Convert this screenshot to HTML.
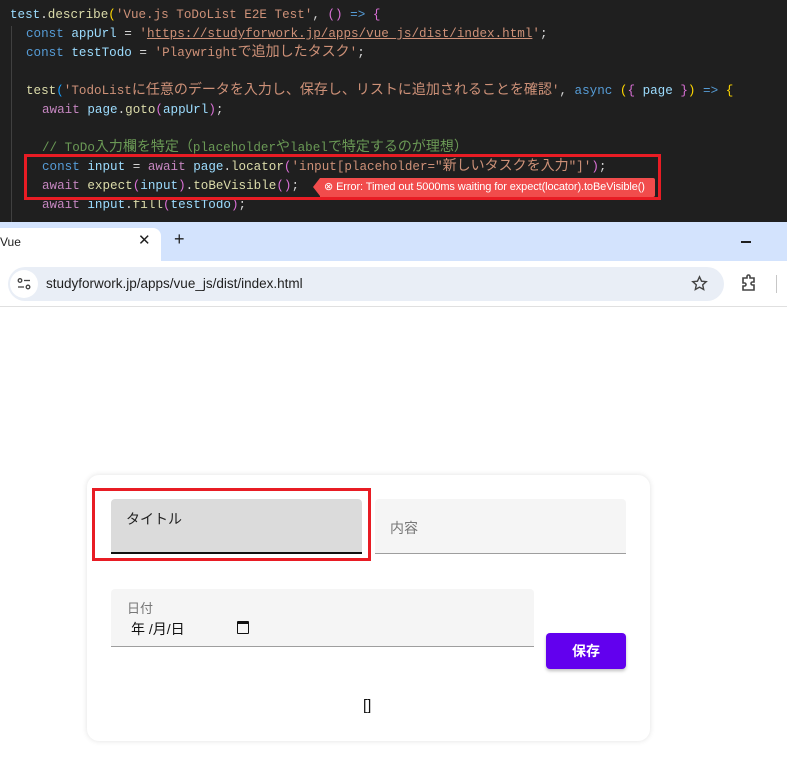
<!DOCTYPE html>
<html><head><meta charset="utf-8"><style>
*{margin:0;padding:0;box-sizing:border-box}
body{width:787px;height:765px;overflow:hidden;background:#fff;font-family:"Liberation Sans","Noto Sans CJK JP",sans-serif;position:relative}
.code{position:absolute;left:0;top:0;width:787px;height:222px;background:#1f1f1f;font-family:"Liberation Mono","Noto Sans CJK JP",monospace;font-size:12.6px;color:#d4d4d4}
.l{position:absolute;white-space:pre;height:19px;line-height:19px}
.j{font-size:14px}
.k{color:#569cd6}.v{color:#9cdcfe}.s{color:#ce9178}.f{color:#dcdcaa}.p{color:#c586c0}.c{color:#6a9955}.y{color:#ffd700}.b{color:#da70d6}.bl{color:#179fff}
.guide{position:absolute;left:11px;top:26px;width:1px;height:196px;background:#404040}
.a{position:absolute}
</style></head><body>
<div class="code">
<div class="guide"></div>
<div class="l" style="left:10px;top:6px"><span class="v">test</span>.<span class="f">describe</span><span class="y">(</span><span class="s">'Vue.js ToDoList E2E Test'</span>, <span class="b">()</span> <span class="k">=&gt;</span> <span class="b">{</span></div>
<div class="l" style="left:26px;top:25px"><span class="k">const</span> <span class="v">appUrl</span> = <span class="s">'<u>https://studyforwork.jp/apps/vue_js/dist/index.html</u>'</span>;</div>
<div class="l" style="left:26px;top:44px"><span class="k">const</span> <span class="v">testTodo</span> = <span class="s">'Playwright<span class="j">で追加したタスク</span>'</span>;</div>
<div class="l" style="left:26px;top:82px"><span class="f">test</span><span class="bl">(</span><span class="s">'TodoList<span class="j">に任意のデータを入力し、保存し、リストに追加されることを確認</span>'</span>, <span class="k">async</span> <span class="y">(</span><span class="b">{</span> <span class="v">page</span> <span class="b">}</span><span class="y">)</span> <span class="k">=&gt;</span> <span class="y">{</span></div>
<div class="l" style="left:42px;top:101px"><span class="p">await</span> <span class="v">page</span>.<span class="f">goto</span><span class="b">(</span><span class="v">appUrl</span><span class="b">)</span>;</div>
<div class="l" style="left:42px;top:139px"><span class="c">// ToDo<span class="j">入力欄を特定（</span>placeholder<span class="j">や</span>label<span class="j">で特定するのが理想）</span></span></div>
<div class="l" style="left:42px;top:158px"><span class="k">const</span> <span class="v">input</span> = <span class="p">await</span> <span class="v">page</span>.<span class="f">locator</span><span class="b">(</span><span class="s">'input[placeholder="<span class="j">新しいタスクを入力</span>"]'</span><span class="b">)</span>;</div>
<div class="l" style="left:42px;top:177px"><span class="p">await</span> <span class="f">expect</span><span class="b">(</span><span class="v">input</span><span class="b">)</span>.<span class="f">toBeVisible</span><span class="b">()</span>;</div>
<div class="l" style="left:42px;top:196px"><span class="p">await</span> <span class="v">input</span>.<span class="f">fill</span><span class="b">(</span><span class="v">testTodo</span><span class="b">)</span>;</div>
<div class="a" style="left:24px;top:154px;width:637px;height:46px;border:3px solid #e81c24"></div>
<div class="a" style="left:320px;top:178px;width:335px;height:19px;background:#f14c4c;color:#fff;font-family:'Liberation Sans',sans-serif;font-size:11px;line-height:19px;padding-left:4px;white-space:nowrap;letter-spacing:-0.1px;border-radius:0 2px 2px 0">⊗ Error: Timed out 5000ms waiting for expect(locator).toBeVisible()</div>
<div class="a" style="left:313px;top:178px;width:0;height:0;border-top:9.5px solid transparent;border-bottom:9.5px solid transparent;border-right:7px solid #f14c4c"></div>
</div>
<div class="a" style="left:0;top:222px;width:787px;height:40px;background:#d3e3fd"></div>
<div class="a" style="left:0;top:228px;width:161px;height:34px;background:#fff;border-radius:0 8px 0 0"></div>
<div class="a" style="left:0;top:235px;font-size:12px;color:#1f1f1f">Vue</div>
<div class="a" style="left:138px;top:231px;font-size:15px;color:#1f1f1f">✕</div>
<div class="a" style="left:174px;top:229px;font-size:18px;color:#1f1f1f">+</div>
<div class="a" style="left:741px;top:241px;width:10px;height:1.5px;background:#1f1f1f"></div>
<div class="a" style="left:0;top:261px;width:787px;height:46px;background:#fff;border-bottom:1px solid #e0e0e0"></div>
<div class="a" style="left:8px;top:267px;width:716px;height:34px;background:#e9eef6;border-radius:17px"></div>
<div class="a" style="left:10px;top:270px;width:28px;height:28px;background:#fff;border-radius:14px"></div>
<svg class="a" style="left:17px;top:277px" width="14" height="14" viewBox="0 0 14 14" fill="none" stroke="#444" stroke-width="1.3"><circle cx="3" cy="3.5" r="1.8"/><line x1="7" y1="3.5" x2="13" y2="3.5"/><line x1="1" y1="10" x2="7" y2="10"/><circle cx="11" cy="10" r="1.8"/></svg>
<div class="a" style="left:46px;top:276px;font-size:13.5px;color:#1f1f1f">studyforwork.jp/apps/vue_js/dist/index.html</div>
<svg class="a" style="left:691px;top:275px" width="17" height="17" viewBox="0 0 24 24" fill="none" stroke="#444" stroke-width="2"><path d="M12 2.5l2.9 6.2 6.6.7-5 4.5 1.4 6.6L12 17.2l-5.9 3.3 1.4-6.6-5-4.5 6.6-.7z"/></svg>
<svg class="a" style="left:740px;top:274px" width="18" height="18" viewBox="0 0 18 18" fill="none" stroke="#444" stroke-width="1.6"><path d="M3 4h4V2.5a1.5 1.5 0 013 0V4h4v4h-1.5a1.5 1.5 0 000 3H14v5H3v-4h1.5a1.5 1.5 0 000-3H3z"/></svg>
<div class="a" style="left:776px;top:275px;width:1px;height:18px;background:#c7c7c7"></div>

<div class="a" style="left:87px;top:475px;width:563px;height:266px;background:#fff;border-radius:12px;box-shadow:0 0 6px rgba(0,0,0,.12)"></div>
<div class="a" style="left:111px;top:499px;width:251px;height:55px;background:#dbdbdb;border-radius:4px 4px 0 0;border-bottom:2px solid #111"></div>
<div class="a" style="left:126px;top:509px;font-size:14px;color:#222">タイトル</div>
<div class="a" style="left:92px;top:488px;width:279px;height:73px;border:3px solid #e81c24"></div>
<div class="a" style="left:375px;top:499px;width:251px;height:55px;background:#f5f5f5;border-radius:4px 4px 0 0;border-bottom:1px solid #9e9e9e"></div>
<div class="a" style="left:390px;top:518px;font-size:14px;color:#777">内容</div>
<div class="a" style="left:111px;top:589px;width:423px;height:58px;background:#f5f5f5;border-radius:4px 4px 0 0;border-bottom:1px solid #9e9e9e"></div>
<div class="a" style="left:127px;top:598px;font-size:13px;color:#777">日付</div>
<div class="a" style="left:131px;top:619px;font-size:14px;color:#111;white-space:pre">年 /月/日</div>
<div class="a" style="left:237px;top:621px;width:12px;height:13px;border:1.5px solid #111;border-top-width:3px;border-radius:1px"></div>
<div class="a" style="left:546px;top:633px;width:80px;height:36px;background:#6200ee;border-radius:4px;color:#fff;font-weight:bold;font-size:14px;text-align:center;line-height:36px;box-shadow:0 2px 3px rgba(0,0,0,.25)">保存</div>
<div class="a" style="left:363px;top:697px;font-size:15px;color:#111">[]</div>
</body></html>
